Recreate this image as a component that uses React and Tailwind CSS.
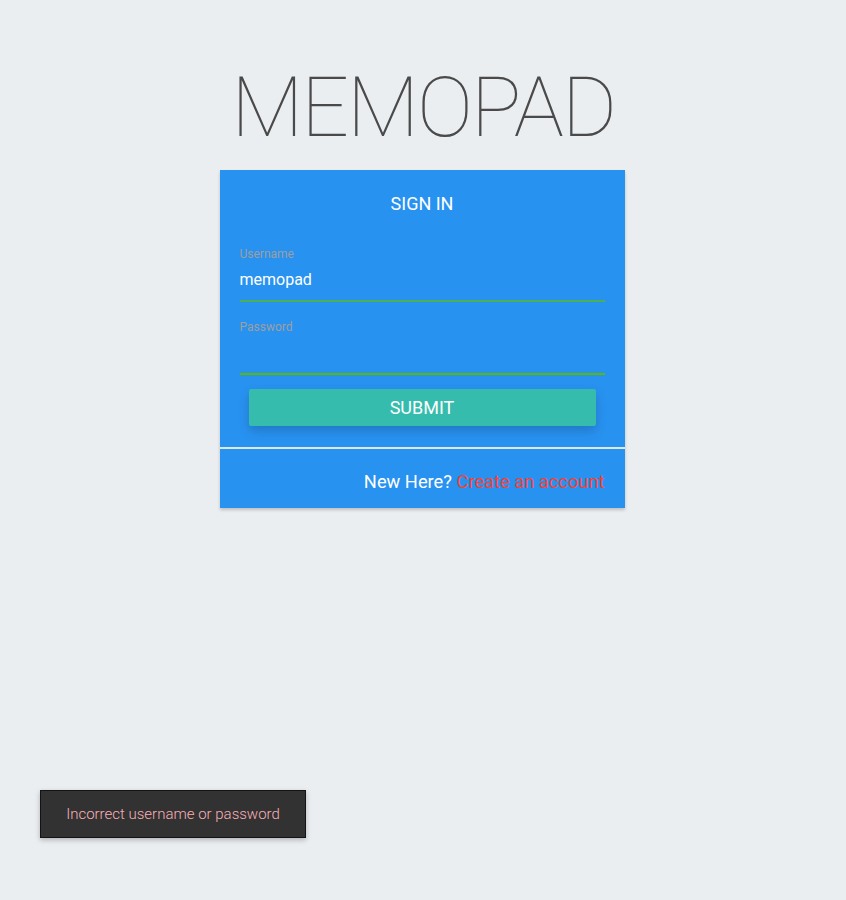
import React from "react";

const App = () => {
  return (
    <div className="relative min-h-[900px] bg-[#ebeef1] font-['Roboto',sans-serif]">
      <div className="flex flex-col items-center pt-[60px]">
        <h1 className="text-[84px] leading-[96px] font-thin text-[#4a4a4a] tracking-[-2px]">MEMOPAD</h1>
        <div className="mt-[14px] w-[405px] -translate-x-[1px] bg-[#2892f1] shadow-[0_2px_3px_rgba(0,0,0,0.2)]">
          <div className="px-5 pt-[23px] pb-[21px]">
            <div className="text-center text-white text-[18px] leading-[22px]">SIGN IN</div>
            <div className="mt-[32px]">
              <label className="block text-[12px] leading-[14px] text-[#9e9e9e]">Username</label>
              <div className="mt-[9px] text-white text-[16px] leading-[20px]">memopad</div>
              <div className="mt-[10px] h-[2px] bg-[#4caf50]" />
            </div>
            <div className="mt-[18px]">
              <label className="block text-[12px] leading-[14px] text-[#9e9e9e]">Password</label>
              <div className="mt-[10px] h-[16px]" />
              <div className="mt-[13px] h-[2px] bg-[#5cb800]" />
            </div>
            <div className="mt-[14px] px-[9px]">
              <button className="w-full h-[37px] rounded-[2px] bg-[#35bcad] text-white text-[18px] shadow-[0_5px_11px_rgba(0,0,0,0.18)]">
                SUBMIT
              </button>
            </div>
          </div>
          <div className="h-[2px] bg-[#dfe6ee]" />
          <div className="px-5 pt-[22px] pb-[15px] text-right text-[18.3px] leading-[22px]">
            <span className="text-white">New Here? </span>
            <a className="text-[#f44336]">Create an account</a>
          </div>
        </div>
      </div>
      <div className="absolute left-[40px] top-[790px] w-[266px] h-[48px] flex items-center justify-center bg-[#323232] border border-black/60 shadow-[0_2px_5px_rgba(0,0,0,0.25)]">
        <span className="text-[#f8b0b8] text-[15px] font-light">Incorrect username or password</span>
      </div>
    </div>
  );
};

export default App;
